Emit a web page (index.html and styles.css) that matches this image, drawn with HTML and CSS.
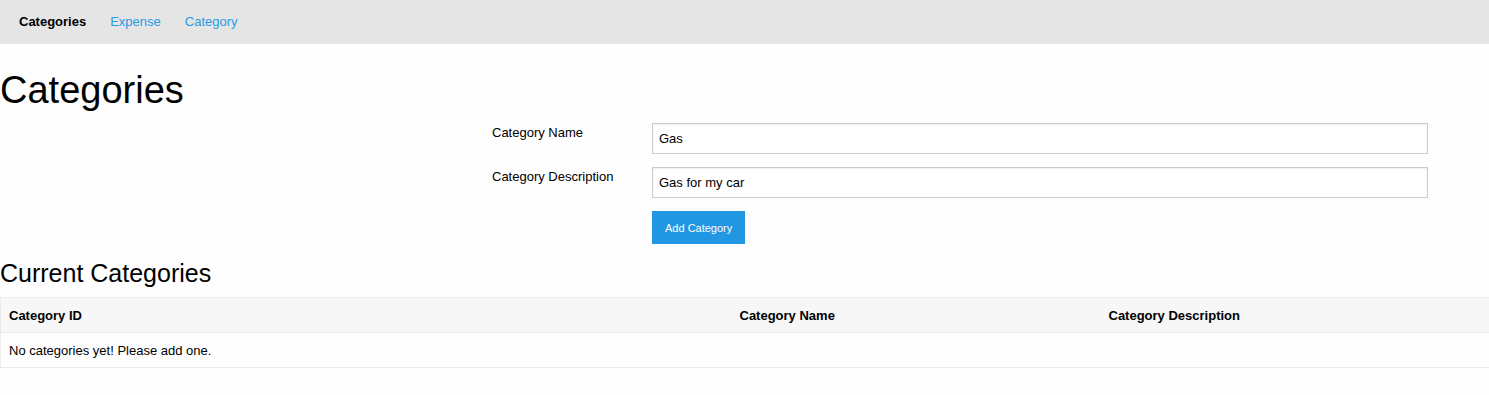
FILE: index.html
```html
<!DOCTYPE html>
<html lang="en">
<head>
    <meta charset="UTF-8">
    <title>Categories</title>
    <link rel="stylesheet" href="styles.css">
</head>
<body>

    <nav class="menu">
        <a class="menu-heading" href="#">Categories</a>
        <a class="menu-link" href="#">Expense</a>
        <a class="menu-link" href="#">Category</a>
    </nav>

    <h1 class="page-title">Categories</h1>

    <form class="category-form">
        <div class="control-group">
            <label for="cat-name">Category Name</label>
            <input type="text" id="cat-name" value="Gas">
        </div>
        <div class="control-group">
            <label for="cat-desc">Category Description</label>
            <input type="text" id="cat-desc" value="Gas for my car">
        </div>
        <div class="controls">
            <button type="button" class="button-primary">Add Category</button>
        </div>
    </form>

    <h2 class="section-title">Current Categories</h2>

    <table class="category-table">
        <colgroup>
            <col class="col-id">
            <col class="col-name">
            <col>
        </colgroup>
        <thead>
            <tr>
                <th>Category ID</th>
                <th>Category Name</th>
                <th>Category Description</th>
            </tr>
        </thead>
        <tbody>
            <tr>
                <td colspan="3">No categories yet! Please add one.</td>
            </tr>
        </tbody>
    </table>

</body>
</html>
```

FILE: styles.css
```css
* {
    box-sizing: border-box;
}

body {
    margin: 0;
    font-family: "Liberation Sans", Arial, sans-serif;
    font-size: 13px;
    color: #000;
    background-color: #fefefe;
}

.menu {
    display: flex;
    align-items: center;
    height: 44px;
    padding-left: 7px;
    background-color: #e5e5e5;
}

.menu a {
    padding: 0 12px;
    text-decoration: none;
    line-height: 44px;
}

.menu-heading {
    font-weight: bold;
    color: #000;
}

.menu-link {
    color: #2a9ae6;
}

.page-title {
    margin: 24px 0 11px 0;
    font-size: 38px;
    font-weight: normal;
    line-height: 44px;
}

.category-form {
    padding-left: 492px;
}

.control-group {
    display: grid;
    grid-template-columns: 160px 776px;
    margin-bottom: 13px;
}

.control-group label {
    padding-top: 2px;
    line-height: 15px;
}

.control-group input {
    height: 31px;
    padding: 0 6px;
    border: 1px solid #ccc;
    background-color: #fff;
    font-family: inherit;
    font-size: 13px;
    color: #000;
    box-shadow: inset 0 1px 2px #eee;
}

.controls {
    padding-left: 160px;
}

.button-primary {
    height: 33px;
    padding: 0 13px;
    border: none;
    background-color: #2196e3;
    color: #fff;
    font-family: inherit;
    font-size: 11px;
    cursor: pointer;
}

.section-title {
    margin: 15px 0 9px 0;
    font-size: 25px;
    font-weight: normal;
    line-height: 29px;
}

.category-table {
    width: 100%;
    border-collapse: collapse;
    border: 1px solid #ebebeb;
    border-right: none;
    table-layout: fixed;
}

.col-id {
    width: 731px;
}

.col-name {
    width: 369px;
}

.category-table th,
.category-table td {
    padding: 10px 8px 9px 8px;
    text-align: left;
    line-height: 15px;
}

.category-table thead {
    background-color: #f7f7f7;
    border-bottom: 1px solid #ebebeb;
}

.category-table th {
    font-weight: bold;
}
```
